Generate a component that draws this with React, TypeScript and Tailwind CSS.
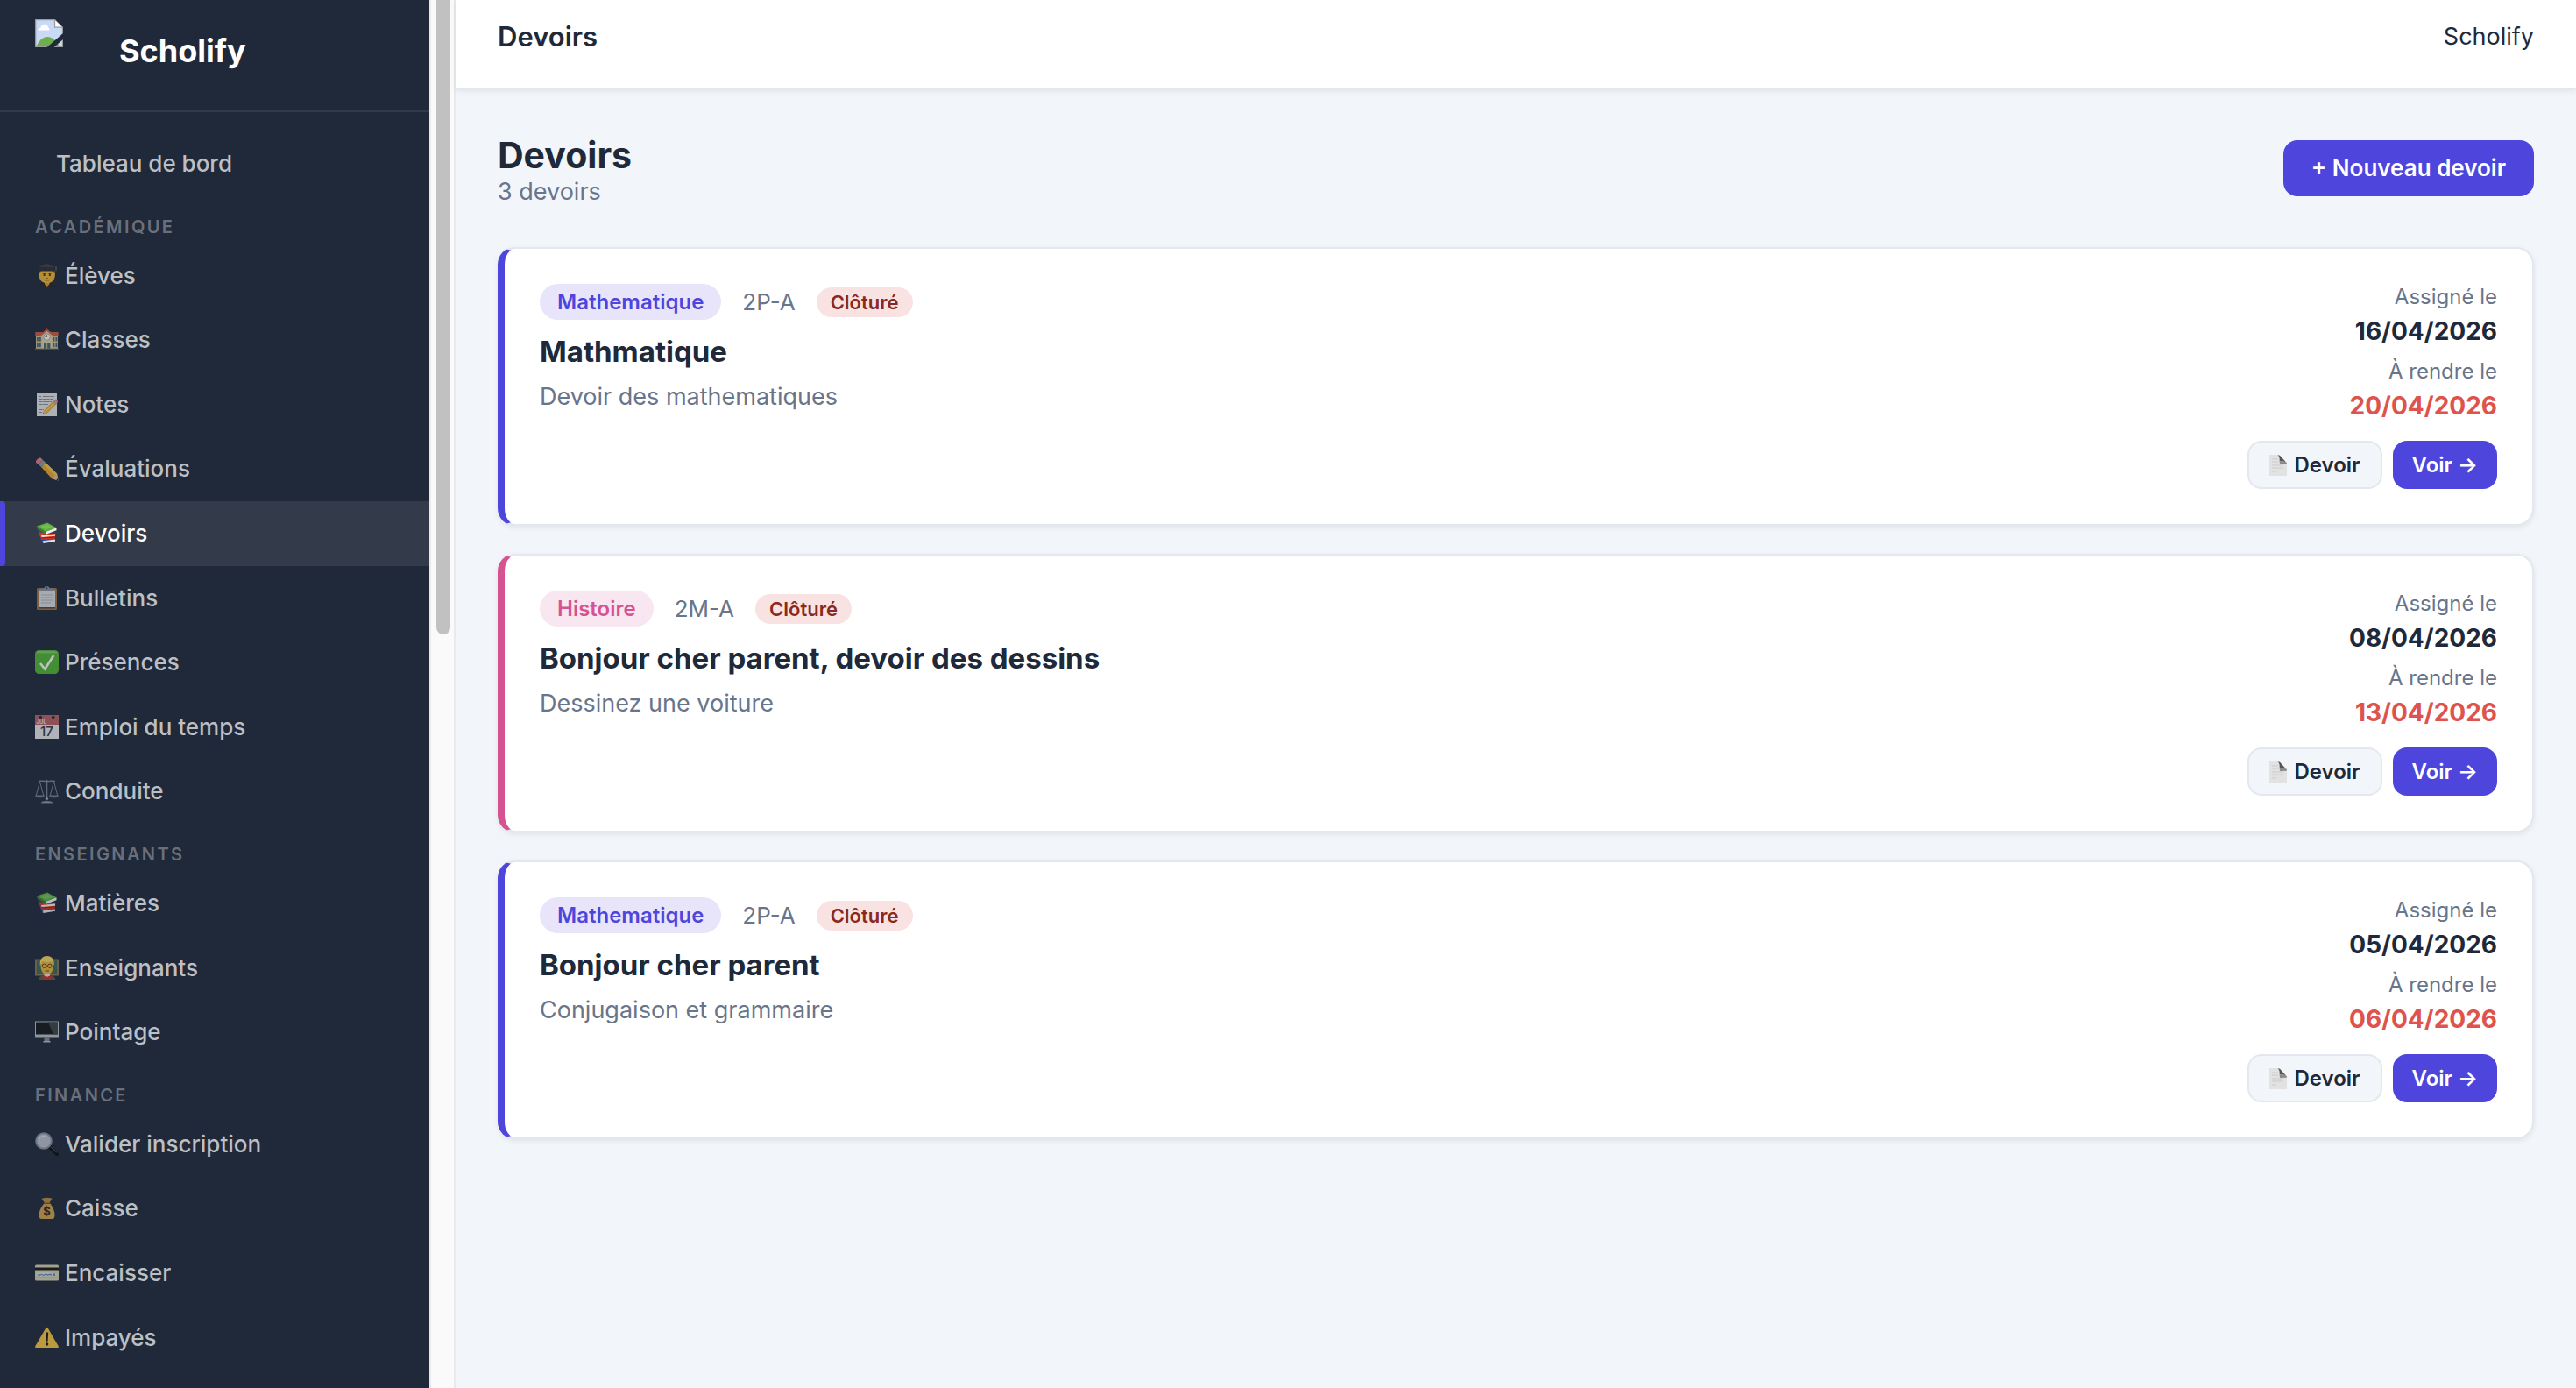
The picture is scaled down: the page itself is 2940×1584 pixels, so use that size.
import React from "react";

type IconName =
  | "student" | "school" | "memo" | "pencil" | "books" | "clipboard" | "check"
  | "calendar" | "scales" | "teacher" | "desktop" | "magnifier" | "moneybag" | "card" | "warning";

const drawings: Record<IconName, React.ReactNode> = {
  student: (
    <>
      <path d="M4 27c.3-3.600 3-5 6-5.600h7c3 .6 6 2 6.300 5.600z" fill="#20242c" />
      <path d="M11 20h5.500v3.500l-2.700 2.500-2.800-2.500z" fill="#d79b2b" />
      <path d="M4.800 8h17.800c.8 6 0 10-3.200 12.500-3.400 2.300-8 2.300-11.400 0C4.800 18 4 14 4.800 8z" fill="#e9b234" />
      <path d="M5 5.500h17.300l.2 4.500-1.500-1.500H6.500L5 10z" fill="#3a2d24" />
      <path d="M1.500 2.500 13.500.3l12 2.200-12 3z" fill="#3b4048" />
      <path d="M5 4h17v4.500c-5-1.500-12-1.500-17 0z" fill="#2b2f37" />
      <path d="M24 3v5" stroke="#7a6a40" strokeWidth="1" />
      <path d="m8 10.500 4 1.300M19.500 10.500l-4 1.300" stroke="#4a3216" strokeWidth="1" />
      <circle cx="10.500" cy="13" r="1.100" fill="#33230f" />
      <circle cx="16.900" cy="13" r="1.100" fill="#33230f" />
      <path d="M12.500 16.500h2.400M11.300 19h4.800" stroke="#a0611b" strokeWidth="1" />
    </>
  ),
  school: (
    <>
      <path d="M1 9h25v15H1z" fill="#c9b78b" />
      <path d="M.3 5h26.400v4H.3z" fill="#c65a43" />
      <path d="M7.500 8 13.500 3l6 5v16h-12z" fill="#d9caa0" />
      <path d="m7 8 6.500-5.500L20 8" fill="none" stroke="#c65a43" strokeWidth="1.800" />
      <path d="M13.500 2.500V0" stroke="#a33" strokeWidth="1" />
      <circle cx="13.500" cy="10.500" r="3.700" fill="#f6f6f2" stroke="#8f8f88" strokeWidth=".7" />
      <path d="M13.500 10.500V8.300M13.500 10.500h-2" stroke="#333" strokeWidth=".8" />
      <g fill="#3f6680">
        <path d="M2 11h1.800v4.500H2zM5 11h1.800v4.500H5zM20.500 11h1.800v4.500h-1.800zM23.500 11h1.800v4.500h-1.800zM2 17.500h1.800V22H2zM5 17.500h1.800V22H5zM20.500 17.500h1.800V22h-1.800zM23.500 17.500h1.800V22h-1.800z" />
        <path d="M10 17.500h7.400V24H10z" />
      </g>
      <path d="M13.700 17.500V24" stroke="#c9b78b" strokeWidth="1" />
      <path d="M0 24h27" stroke="#86805f" strokeWidth="1" />
    </>
  ),
  memo: (
    <>
      <path d="M2 0h23v27H2z" fill="#dcdee0" />
      <path d="M5 4.500h2M9 4.500h13M5 7.500h15M5 10.500h14M5 13.500h10M5 16.500h7M5 19.500h5M5 22.500h3" stroke="#84888d" strokeWidth="1" strokeDasharray="3.500 .6" />
      <path d="m9 25 1-4.500L21 9.500l3.500 3.500-11 11z" fill="#e3a72f" />
      <path d="m11.500 22.500 11-11" stroke="#f3cd62" strokeWidth="1.200" />
      <path d="m9 25 1-4.500 3.500 3.500z" fill="#d9b98a" />
      <path d="m9 25 .5-2 1.400 1.500z" fill="#222" />
      <path d="m20 10.500 1.700-1.700 3.500 3.500-1.700 1.700z" fill="#98a5b5" />
      <path d="m21.700 8.800 1-.8c1-.8 4 1.900 3.200 3l-.7 1.300z" fill="#e07a82" />
    </>
  ),
  pencil: (
    <>
      <path d="m7 11 5-5L25 18.500l1.800 8-7.300-2z" fill="#e2a32c" />
      <path d="m9.800 8.300 2.400-2.300L25 18.500l-2.300 2.300z" fill="#f0c047" />
      <path d="m19.300 24.300 5.700-5.800 1.800 8z" fill="#d9bc90" />
      <path d="m24.300 25.800 2.500.7-.6-2.700z" fill="#26231f" />
      <path d="M3.800 7.800 9 3l3.200 3L7 11z" fill="#8398ae" />
      <path d="M1.200 6C0 4 4.300-.3 6.700.8L9 3 3.800 7.800z" fill="#dd7a80" />
    </>
  ),
  books: (
    <>
      <path d="m3 10.500 17 7.500 3.500 4.500L8.500 25 6 18.500z" fill="#2f4ca0" />
      <path d="m9 22.300 14-1.800v2.200L9.500 25z" fill="#dde0e4" />
      <path d="m4 12 5 1 14.500 1-1 6L7.500 21z" fill="#d2331f" />
      <path d="m7 16 16-1.500v2.300L7.700 18z" fill="#eceae4" />
      <path d="m7.500 19 15-1" stroke="#8e1d12" strokeWidth="1" />
      <path d="m2 5.500 12-4 10.500 5.800L12 12z" fill="#5fae45" />
      <path d="m6 5.800 8-2.600 6 3.300-8 2.800z" fill="#7fc763" opacity=".6" />
      <path d="M2 5.500 12 12v3L2.500 8.500z" fill="#3b7f2d" />
      <path d="m12 12 12.500-4.700v2.900L12 15z" fill="#eef0ea" />
    </>
  ),
  clipboard: (
    <>
      <rect x="2" y="2" width="23" height="25" rx="1.500" fill="#96714a" />
      <path d="M4 4.500h19V24H4z" fill="#d4d7da" />
      <path d="M4 24h19v1.500H4z" fill="#5d4329" />
      <path d="M7 10h13M7 13h13M7 16h13M7 19h11" stroke="#b9bcc0" strokeWidth="1.700" />
      <path d="M5.500 5V2.700h4.800C10.500 1 12 0 13.500 0s3 1 3.200 2.700h4.800V5z" fill="#7f8fa6" />
      <circle cx="13.500" cy="2.300" r="1" fill="#39424f" />
    </>
  ),
  check: (
    <>
      <rect width="27" height="27" rx="4.500" fill="#4fb033" />
      <path d="M4.500 1h18c2 0 3 1 3.300 2.500H1.200C1.500 2 2.500 1 4.500 1z" fill="#8fcb77" opacity=".7" />
      <path d="m6 15 5.300 6.500L21.300 6" fill="none" stroke="#f2f5f0" strokeWidth="2.600" />
    </>
  ),
  calendar: (
    <>
      <path d="M0 0h27v27H0z" fill="#dfe1e3" />
      <path d="M0 0h27v11H0z" fill="#b25f61" />
      <circle cx="6.300" cy="2.500" r="1.800" fill="#252c38" />
      <circle cx="20.700" cy="2.500" r="1.800" fill="#252c38" />
      <text x="1.500" y="9.500" fontSize="6" fontWeight="700" fill="#e9d5d5" fontFamily="Inter, sans-serif">JUL</text>
      <text x="13.500" y="24" textAnchor="middle" fontSize="15" fontWeight="500" fill="#33373d" fontFamily="Inter, sans-serif">17</text>
    </>
  ),
  scales: (
    <g fill="none" stroke="#75808c" strokeWidth="1">
      <path d="M4 1.500c3-1 6 .5 9.500 0 3.500.5 6.500-1 9.500 0" strokeWidth="1.500" />
      <path d="M13.500 0v23" strokeWidth="1.600" />
      <path d="M5.500 2 1.200 18M5.500 2l4.300 16M21.500 2l-4.300 16M21.500 2l4.300 16" />
      <path d="M.5 18h10c-1 2.500-9 2.500-10 0zM16.500 18h10c-1 2.500-9 2.500-10 0z" fill="#68737f" />
      <path d="M7 26c1-2 12-2 13 0z" fill="#a9b1ba" />
      <circle cx="13.500" cy="21.500" r="1.300" fill="#c4cad0" />
    </g>
  ),
  teacher: (
    <>
      <path d="M0 3.500h27v19H0z" fill="#8b7358" />
      <path d="M1.800 5.300h23.400v15.400H1.800z" fill="#396a58" />
      <path d="M4 27c.5-3.500 3-4.500 6-5h7c3 .5 6 1.500 6.500 5z" fill="#6b5038" />
      <path d="M9.500 22.500h8.500L19 27H8.500z" fill="#c32f2b" />
      <path d="M10.500 20h6.500v2.500l-3.300 1.300-3.200-1.300z" fill="#e8e4dc" />
      <path d="M6.500 8.500c0-4 3-6.500 7.200-6.500s7.300 2.500 7.300 6.500c.3 5.500-1 10-4.300 12-1.800 1-4.200 1-6 0-3.300-2-4.500-6.500-4.200-12z" fill="#e6b23c" />
      <path d="M5.800 11C5 4 8 0 13.700 0c5.800 0 8.700 4 7.900 11-1-1.500-1-3.500-2-5-3 1-8 .8-11 0-1.600 1.500-1.800 3.500-2.800 5z" fill="#efcf64" />
      <g fill="none" stroke="#4c3413" strokeWidth=".9">
        <circle cx="10.500" cy="11.300" r="2.200" />
        <circle cx="16.900" cy="11.300" r="2.200" />
        <path d="M12.600 11h2.200M11.500 17h4.500" />
      </g>
    </>
  ),
  desktop: (
    <>
      <path d="M0 1.500h27v19H0z" fill="#b4b9be" />
      <path d="M1 2.500h25v14H1z" fill="#16181c" />
      <path d="M15 2.500h11v14h-5z" fill="#3f4247" />
      <path d="M10.500 20.500h6V24h-6z" fill="#83888e" />
      <path d="M9.500 24h8v1.500h-8z" fill="#b5babf" />
    </>
  ),
  magnifier: (
    <>
      <path d="m17 17 8 8" stroke="#0d0f12" strokeWidth="4.400" strokeLinecap="round" />
      <path d="m18.500 17 6 6" stroke="#6a7078" strokeWidth="1" strokeLinecap="round" />
      <circle cx="10" cy="10" r="8.800" fill="#b4bac6" stroke="#7f8d9b" strokeWidth="2" />
      <path d="M4.500 8.500c1-3 4-4.700 7.500-4" fill="none" stroke="#d2d7de" strokeWidth="1.300" />
    </>
  ),
  moneybag: (
    <>
      <path d="M7.500 1.500c2 .8 3-.8 4.700-.3 1.500-1.200 3 .4 4.600-.3.800.4 1.700.8 2.700.6-1 2.500-2.800 4-3 6h-5.500c-.2-2-2.500-3.500-3.500-6z" fill="#b98a43" />
      <path d="M10.300 7.500h7c3 3.500 5.200 9 5.200 13 0 3-1 4.500-3 4.500h-12c-2 0-3-1.500-3-4.500 0-4 2.800-9.500 5.800-13z" fill="#c9a04d" />
      <path d="M10 7.300h7.300" stroke="#7a5526" strokeWidth="1.500" />
      <text x="13.600" y="21.300" textAnchor="middle" fontSize="13" fontWeight="700" fill="#33291a" fontFamily="Inter, sans-serif">$</text>
    </>
  ),
  card: (
    <>
      <rect y="4.500" width="27" height="18" rx="1.500" fill="#cfcba8" />
      <path d="M0 7.500h27v3H0z" fill="#16171a" />
      <path d="M2 13.500h14v2H2z" fill="#e3e1cf" />
      <path d="M2 14.500h23v3H2z" fill="#c3d0dc" />
      <path d="M3 16h3.500l1-1 2 1.500L12 15l2 1 3-.5 2 .5" fill="none" stroke="#3f68a8" strokeWidth="1" />
      <path d="M22 14.500v2.500" stroke="#5f6570" strokeWidth="1.500" />
      <path d="M0 19h27" stroke="#b9b48e" strokeWidth="1" />
    </>
  ),
  warning: (
    <>
      <path d="M12.500 2.300c.5-.8 1.500-.8 2 0l12.200 21c.5.900 0 1.700-1 1.700H1.300c-1 0-1.500-.8-1-1.700z" fill="#efc23f" />
      <path d="M12 7.500h3.200l-.6 10.300h-2z" fill="#1d1b14" />
      <circle cx="13.600" cy="21" r="1.700" fill="#1d1b14" />
    </>
  ),
};

function NavIcon({ name }: { name: IconName }) {
  return (
    <svg viewBox="0 0 27 27" className="size-[27px] shrink-0" aria-hidden="true">
      {drawings[name]}
    </svg>
  );
}

function MissingImage() {
  return (
    <svg viewBox="0 0 32 32" className="size-8 shrink-0" role="img" aria-label="Logo">
      <path d="M.7.7h21.800l9 9v21.600H.7z" fill="#c9daf6" stroke="#9b9b9b" strokeWidth="1.300" />
      <path d="M1.500 31c2.500-6 7-11 12.500-11s10 4 14 11z" fill="#6eae4b" />
      <path d="M3.500 12.500c0-2 1.300-2.800 2.800-2.800.5-2.500 2.300-3.900 4.500-3.900 2.400 0 4 1.700 4.200 3.800 1 .2 1.400 1 1.400 2.900z" fill="#fff" />
      <path d="M22.500.7v8.500h9" fill="#fff" stroke="#9b9b9b" strokeWidth="1.300" />
      <path d="M13 32.500 32.500 15.500v7L21 32.500z" fill="#202939" />
    </svg>
  );
}

function PageGlyph() {
  return (
    <svg viewBox="0 0 20 24" className="h-6 w-5 shrink-0" aria-hidden="true">
      <path d="M0 0h10.500L20 9.500V24H0z" fill="#e2e2e2" />
      <path d="M3 5h7M3 8h7M3 12h13M3 15h13M3 19h5" stroke="#cbcbcb" strokeWidth="1" />
      <path d="M8.500 0c3 .5 3.500 4 3.200 7.500 3.300-.6 7.300-.3 8.300 3.200V9.500L12 .8z" fill="#555" />
      <path d="M11.700 7.500c3.300-.6 7.300-.3 8.300 3.200l-8 .3z" fill="#8b8b8b" />
    </svg>
  );
}

interface NavEntry {
  label: string;
  icon: IconName;
  active?: boolean;
}

const sections: { title: string; items: NavEntry[] }[] = [
  {
    title: "Académique",
    items: [
      { label: "Élèves", icon: "student" },
      { label: "Classes", icon: "school" },
      { label: "Notes", icon: "memo" },
      { label: "Évaluations", icon: "pencil" },
      { label: "Devoirs", icon: "books", active: true },
      { label: "Bulletins", icon: "clipboard" },
      { label: "Présences", icon: "check" },
      { label: "Emploi du temps", icon: "calendar" },
      { label: "Conduite", icon: "scales" },
    ],
  },
  {
    title: "Enseignants",
    items: [
      { label: "Matières", icon: "books" },
      { label: "Enseignants", icon: "teacher" },
      { label: "Pointage", icon: "desktop" },
    ],
  },
  {
    title: "Finance",
    items: [
      { label: "Valider inscription", icon: "magnifier" },
      { label: "Caisse", icon: "moneybag" },
      { label: "Encaisser", icon: "card" },
      { label: "Impayés", icon: "warning" },
    ],
  },
];

function NavItem({ label, icon, active }: NavEntry) {
  return (
    <a
      href="#"
      aria-current={active ? "page" : undefined}
      className={
        active
          ? "relative flex items-center gap-[7px] bg-[#333a49] px-10 py-4 text-[26px] leading-[1.6] font-medium text-white before:absolute before:inset-y-0 before:left-0 before:w-1.5 before:rounded-r before:bg-[#4e46dc]"
          : "flex items-center gap-[7px] px-10 py-4 text-[26px] leading-[1.6] font-medium text-[#bcbfc4]"
      }
    >
      <span className={active ? "flex" : "flex opacity-75"}>
        <NavIcon name={icon} />
      </span>
      {label}
    </a>
  );
}

function Sidebar() {
  return (
    <aside className="flex w-[520px] shrink-0 overflow-hidden">
      <div className="min-w-0 grow bg-[#202939]">
        <div className="flex gap-16 border-b-2 border-[#323a49] px-10 pt-[22px] pb-[38px]">
          <MissingImage />
          <p className="pt-1.5 text-[36px] leading-[60px] font-bold text-white">Scholify</p>
        </div>
        <nav aria-label="Navigation principale" className="pt-[22px]">
          <a href="#" className="block px-16 py-4 text-[26px] leading-[1.6] font-medium text-[#bcbfc4]">
            Tableau de bord
          </a>
          {sections.map((section) => (
            <section key={section.title}>
              <h2 className="px-10 pt-5 pb-1 text-[20px] leading-[30px] font-semibold tracking-[0.12em] text-[#6a707b] uppercase">
                {section.title}
              </h2>
              {section.items.map((item) => (
                <NavItem key={item.label} {...item} />
              ))}
            </section>
          ))}
        </nav>
      </div>
      <div className="w-[30px] shrink-0 border-x-2 border-[#eaeaea] bg-[#fafafa] pr-1 pl-1.5" aria-hidden="true">
        <div className="h-[724px] rounded-b-full bg-[#c1c1c1]" />
      </div>
    </aside>
  );
}

interface Homework {
  subject: string;
  tone: "indigo" | "pink";
  group: string;
  title: string;
  description: string;
  assigned: string;
  due: string;
}

const homeworks: Homework[] = [
  { subject: "Mathematique", tone: "indigo", group: "2P-A", title: "Mathmatique", description: "Devoir des mathematiques", assigned: "16/04/2026", due: "20/04/2026" },
  { subject: "Histoire", tone: "pink", group: "2M-A", title: "Bonjour cher parent, devoir des dessins", description: "Dessinez une voiture", assigned: "08/04/2026", due: "13/04/2026" },
  { subject: "Mathematique", tone: "indigo", group: "2P-A", title: "Bonjour cher parent", description: "Conjugaison et grammaire", assigned: "05/04/2026", due: "06/04/2026" },
];

const edgeTone = { indigo: "border-l-[#4e46dc]", pink: "border-l-[#d65391]" };
const badgeTone = { indigo: "bg-[#e8e5fa] text-[#4e46dc]", pink: "bg-[#f8e7f1] text-[#d65391]" };

function HomeworkCard({ item }: { item: Homework }) {
  return (
    <article
      className={`flex justify-between rounded-[20px] border-2 border-l-8 border-[#e3e8ee] bg-white p-10 shadow-[0_2px_6px_rgba(0,0,0,0.08)] ${edgeTone[item.tone]}`}
    >
      <div>
        <div className="flex items-center gap-6">
          <span className={`rounded-full px-5 text-[24px] leading-[41px] font-semibold ${badgeTone[item.tone]}`}>{item.subject}</span>
          <span className="text-[26px] leading-[41px] text-[#68758b]">{item.group}</span>
          <span className="rounded-full bg-[#f9e3e2] px-4 text-[22px] leading-[34px] font-semibold text-[#8b2820]">Clôturé</span>
        </div>
        <h2 className="mt-3 text-[33px] leading-[48px] font-bold text-[#202939]">{item.title}</h2>
        <p className="mt-1.5 text-[27px] leading-[44px] text-[#68758b]">{item.description}</p>
      </div>
      <div className="flex flex-col items-end text-right">
        <dl>
          <dt className="text-[24px] leading-[30px] text-[#68758b]">Assigné le</dt>
          <dd className="text-[28px] leading-[48px] font-bold text-[#202939]">{item.assigned}</dd>
          <dt className="mt-[7px] text-[24px] leading-[30px] text-[#68758b]">À rendre le</dt>
          <dd className="text-[28px] leading-[48px] font-bold text-[#de534c]">{item.due}</dd>
        </dl>
        <div className="mt-4 flex gap-3">
          <button type="button" className="flex items-center gap-2 rounded-2xl border-2 border-[#e3e8ee] bg-[#f2f5f9] px-[23px] py-2 text-[24px] leading-[35px] font-semibold text-[#202939]">
            <PageGlyph />
            Devoir
          </button>
          <button type="button" className="rounded-2xl bg-[#4e46dc] px-[22px] py-2.5 text-[24px] leading-[35px] font-semibold text-white">
            Voir →
          </button>
        </div>
      </div>
    </article>
  );
}

export default function App() {
  return (
    <div className="flex h-screen overflow-hidden bg-[#f2f5fa] font-['Inter',sans-serif] text-[#202939]">
      <Sidebar />
      <div className="min-w-0 grow">
        <header className="flex justify-between border-b-2 border-[#e3e8ee] bg-white px-12 pt-5 pb-9 shadow-[0_2px_6px_rgba(0,0,0,0.08)]">
          <p className="text-[31px] leading-[44px] font-semibold">Devoirs</p>
          <p className="text-[27px] leading-[44px]">Scholify</p>
        </header>
        <main className="px-12 pt-12">
          <div className="flex items-center justify-between">
            <div>
              <h1 className="text-[41px] leading-[54px] font-bold">Devoirs</h1>
              <p className="text-[27px] leading-[30px] text-[#68758b]">3 devoirs</p>
            </div>
            <button type="button" className="rounded-2xl bg-[#4e46dc] px-8 py-3 text-[26px] leading-10 font-semibold text-white">
              + Nouveau devoir
            </button>
          </div>
          <div className="mt-12 flex flex-col gap-8">
            {homeworks.map((item) => (
              <HomeworkCard key={item.title} item={item} />
            ))}
          </div>
        </main>
      </div>
    </div>
  );
}
